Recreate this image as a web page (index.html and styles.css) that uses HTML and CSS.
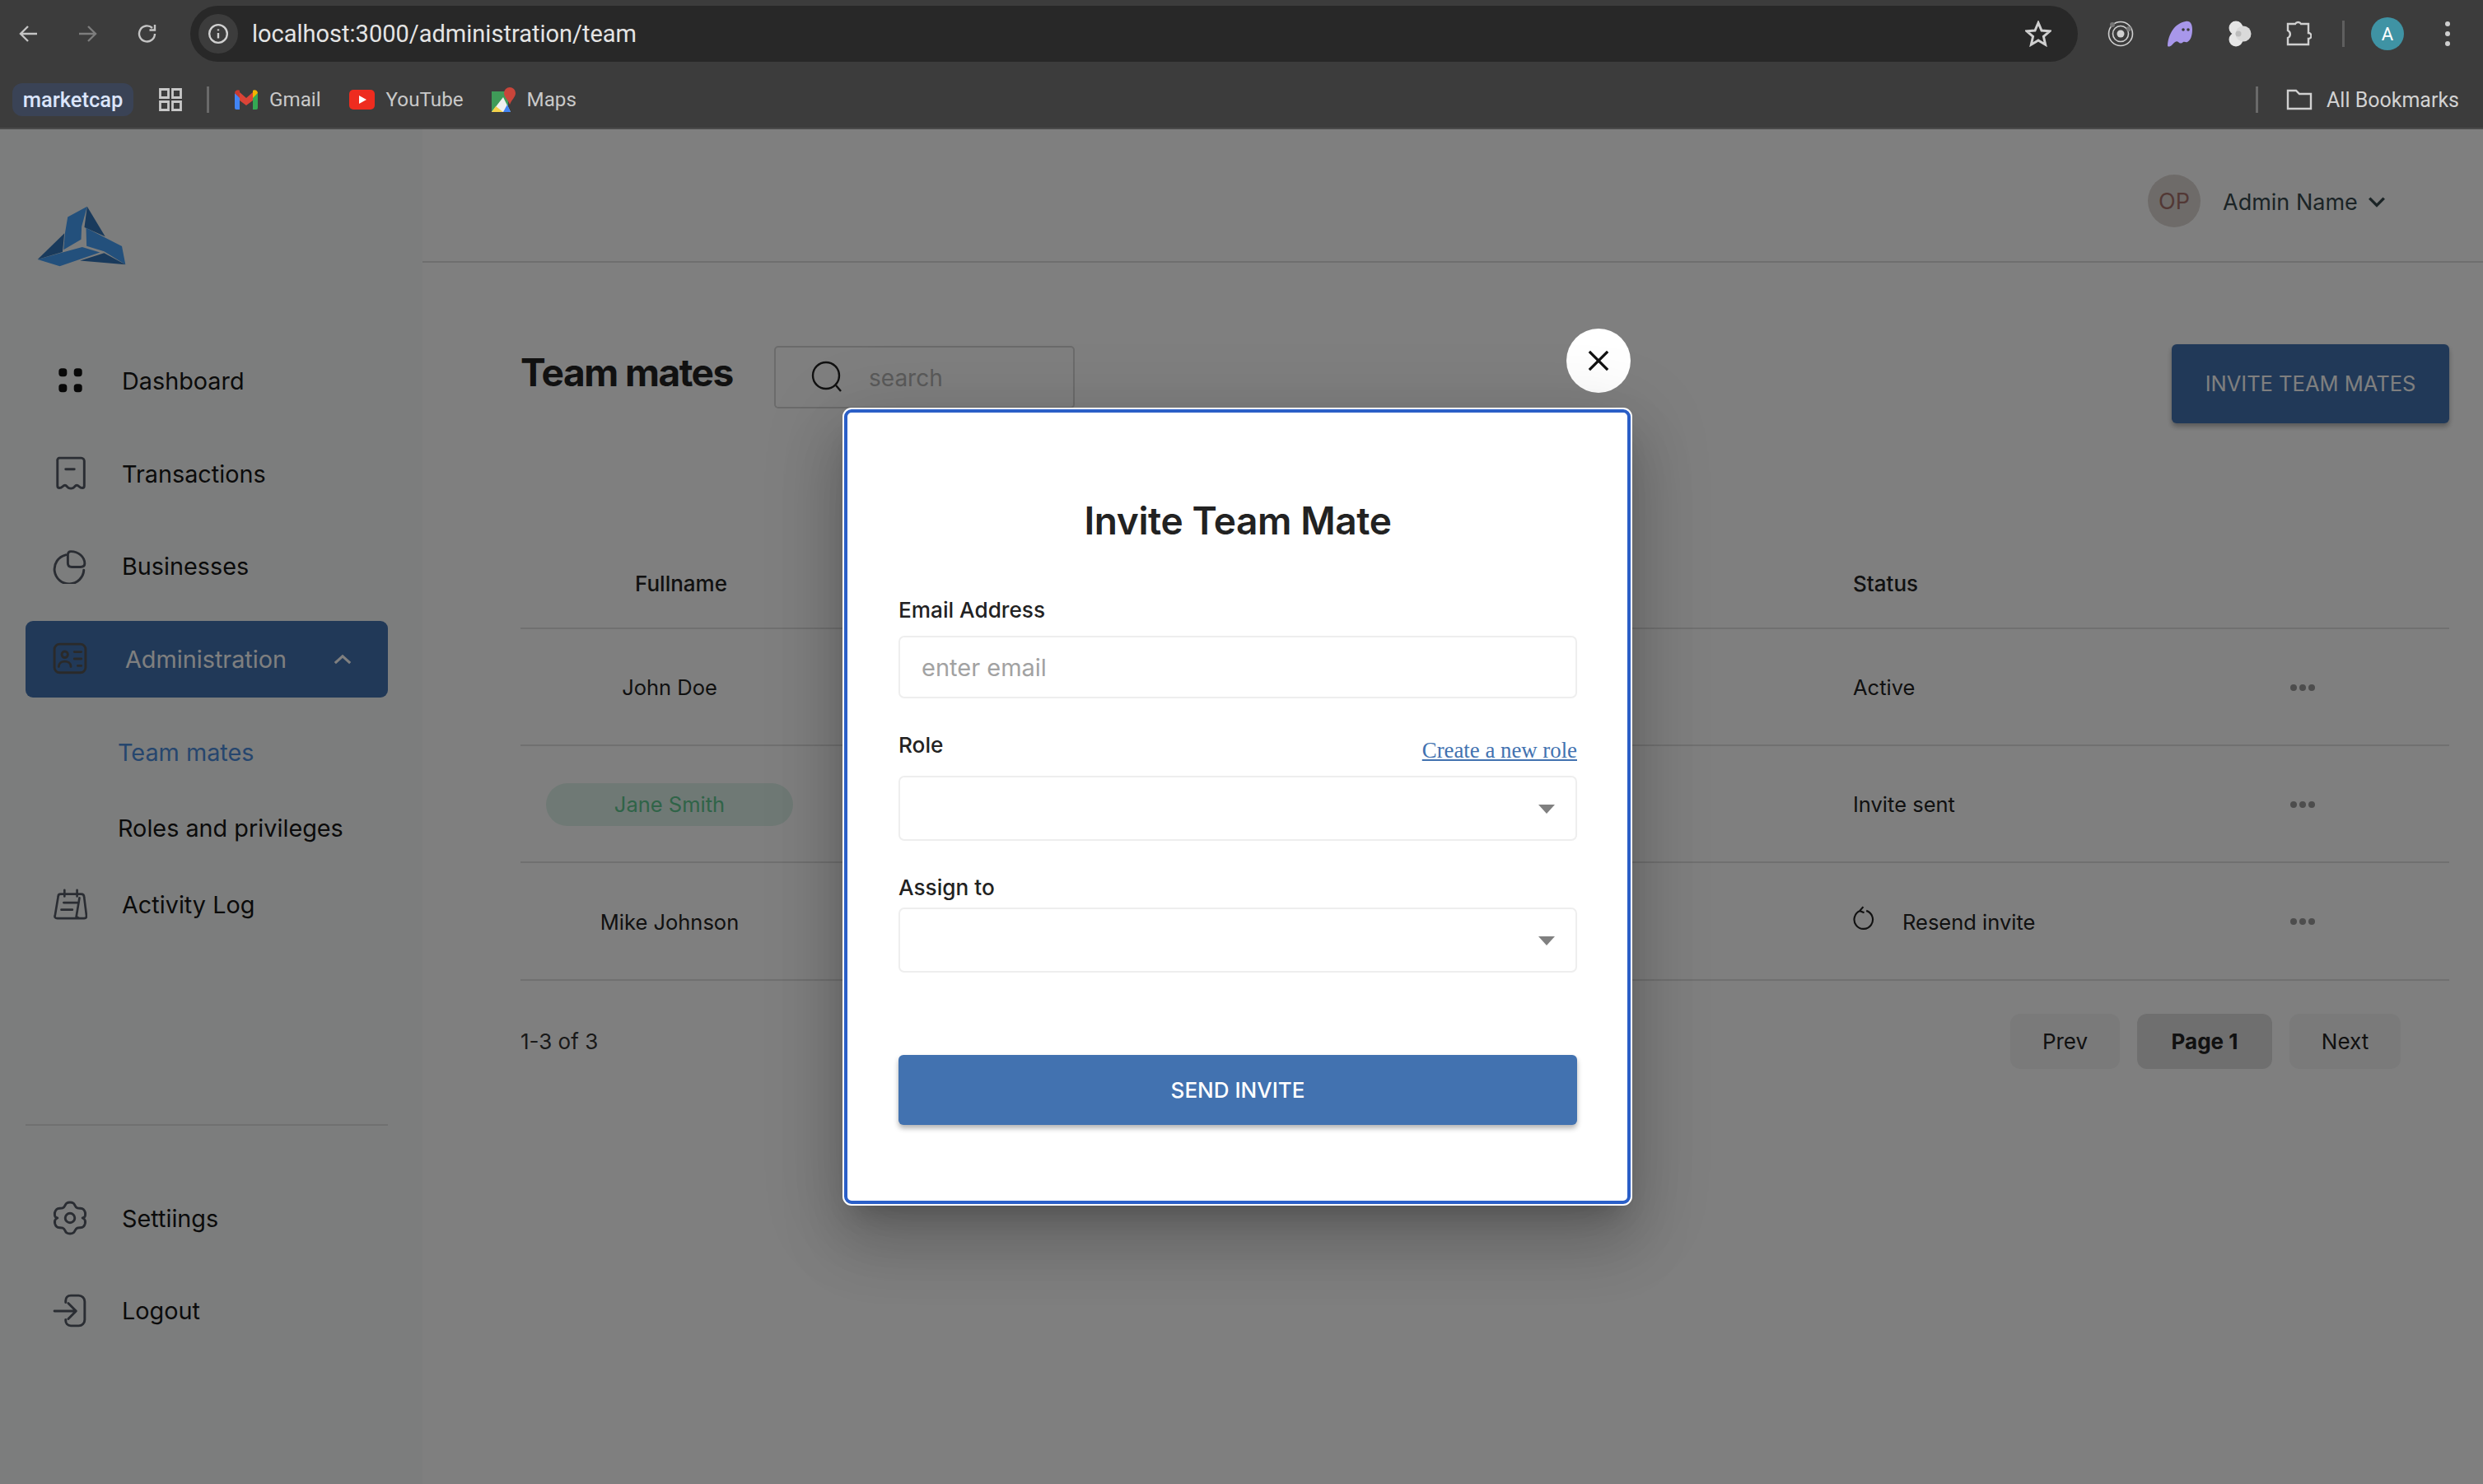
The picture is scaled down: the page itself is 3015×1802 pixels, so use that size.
FILE: index.html
```html
<!DOCTYPE html>
<html lang="en">
<head>
    <meta charset="UTF-8">
    <title>Team mates</title>
    <link rel="stylesheet" href="styles.css">
</head>
<body>
    <!-- browser chrome -->
    <div class="chrome">
        <div class="toolbar">
            <svg class="nav-arrow back" viewBox="0 0 24 24"><path d="M22 12H3M11 3l-9 9 9 9"/></svg>
            <svg class="nav-arrow forward" viewBox="0 0 24 24"><path d="M2 12h19M13 3l9 9-9 9"/></svg>
            <svg class="nav-arrow reload" viewBox="0 0 24 24"><path d="M21 12a9.5 9.5 0 1 1-3-7M21 1v6.500h-6.500"/></svg>
            <div class="urlbar">
                <span class="site-info">
                    <svg viewBox="0 0 24 24"><circle cx="12" cy="12" r="10"/><path d="M12 11v6M12 7v1.500"/></svg>
                </span>
                <span class="url">localhost:3000/administration/team</span>
                <svg class="star" viewBox="0 0 24 24"><path d="M12 2l3 7 7.500.6-5.700 4.900 1.700 7.400-6.500-3.900-6.500 3.900 1.700-7.400-5.700-4.900 7.500-.6z"/></svg>
            </div>
            <div class="ext-icons">
                <svg class="ext" viewBox="0 0 32 32"><circle cx="16" cy="16" r="14.500" fill="none" stroke="#d0d0d0" stroke-width="1.600"/><circle cx="16" cy="16" r="9.500" fill="none" stroke="#d0d0d0" stroke-width="1.600"/><circle cx="16" cy="16" r="4.500" fill="#d0d0d0"/><circle cx="6" cy="5" r="3" fill="#777"/><circle cx="26" cy="10" r="3" fill="#777"/></svg>
                <svg class="ext" viewBox="0 0 32 32"><path d="M1 30C2 16 10 3 23 1c6-1 8 4 8 10 0 7-2 13-6 15-2 1-3-1-5 0-2 2-4 2-6 0-3-2-5 1-8 4-3 2-5 2-5 0z" fill="#a897ea"/><circle cx="20" cy="11" r="1.800" fill="#3c3c3c"/><circle cx="26" cy="11" r="1.800" fill="#3c3c3c"/></svg>
                <svg class="ext" viewBox="0 0 32 32"><circle cx="12" cy="9" r="8.500" fill="#e6e6e6"/><circle cx="12" cy="23" r="8.500" fill="#e6e6e6"/><circle cx="21" cy="16" r="9.500" fill="#dadada"/><circle cx="15" cy="16" r="3.500" fill="#bdbdbd"/></svg>
                <svg class="ext puzzle" viewBox="0 0 32 32"><path d="M3 4h9a4 4 0 0 1 7 0h9v11a3.500 3.500 0 0 1 0 7v7H3v-8a5 5 0 0 0 0-9z"/></svg>
                <span class="ext-sep"></span>
                <span class="profile">A</span>
                <span class="menu-dots"><i></i><i></i><i></i></span>
            </div>
        </div>
        <div class="bookmarks">
            <span class="chip-mark">marketcap</span>
            <svg class="apps" viewBox="0 0 28 28"><path d="M1.500 1.500h10v10h-10zM16.500 1.500h10v10h-10zM1.500 16.500h10v10h-10zM16.500 16.500h10v10h-10z"/></svg>
            <span class="mark-sep"></span>
            <span class="mark gmail">
                <svg viewBox="0 0 28 24"><path d="M0 4v18a2 2 0 0 0 2 2h4V9z" fill="#4285f4"/><path d="M28 4v18a2 2 0 0 1-2 2h-4V9z" fill="#34a853"/><path d="M6 13V3L14 10 22 3v10l-8 6z" fill="#db4437"/><path d="M0 4c0-3 4-5 6-3v9z" fill="#c5392f"/><path d="M28 4c0-3-4-5-6-3v9z" fill="#f4b400"/></svg>
                Gmail
            </span>
            <span class="mark youtube">
                <svg viewBox="0 0 31 24"><rect width="31" height="24" rx="5" fill="#ee2c1f"/><path d="M12 7l9 5-9 5z" fill="#fff"/></svg>
                YouTube
            </span>
            <span class="mark maps">
                <svg viewBox="0 0 29 30"><path d="M0 5h20v25H0z" fill="#3f9b58"/><path d="M0 30L14 12l9 18z" fill="#f0f0f0"/><path d="M0 30l5-7 9 7z" fill="#f5d24a"/><path d="M14 30l5-9 4 9z" fill="#4285f4"/><path d="M22 0a7 7 0 0 1 7 7c0 5-5 8-7 14-2-6-7-9-7-14a7 7 0 0 1 7-7z" fill="#c9453a"/></svg>
                Maps
            </span>
            <span class="all-marks">
                <span class="mark-sep"></span>
                <svg class="folder" viewBox="0 0 32 26"><path d="M2 2h10l4 4h14v18H2z"/></svg>
                All Bookmarks
            </span>
        </div>
    </div>

    <div class="app">
        <aside class="sidebar">
            <svg class="logo" viewBox="135 150 325 222">
                <path d="M247 190l71-38-20 73-2 47-64 38 5-60z" fill="#46a0f8"/>
                <path d="M318 152l66 110-76-34z" fill="#3375b8"/>
                <path d="M314 230l131 67 13 67-78-48-64-20z" fill="#46a0f8"/>
                <path d="M380 322l78 42-166-14z" fill="#3375b8"/>
                <path d="M137 345l91-25 72-20 65 20-147 50z" fill="#46a0f8"/>
                <path d="M235 250l-7 68-91 27z" fill="#3375b8"/>
            </svg>

            <nav class="side-nav">
                <a class="nav-item">
                    <svg class="nav-icon" viewBox="0 0 40 40"><g class="solid"><rect x="7" y="5" width="9.500" height="9.500" rx="3.500"/><rect x="24.500" y="5" width="9.500" height="9.500" rx="3.500"/><rect x="7" y="23" width="9.500" height="9.500" rx="3.500"/><rect x="24.500" y="23" width="9.500" height="9.500" rx="3.500"/></g></svg>
                    Dashboard
                </a>
                <a class="nav-item">
                    <svg class="nav-icon" viewBox="0 0 40 40"><path d="M7 2h26a3.500 3.500 0 0 1 3.500 3.500V34c0 4-4 3-6 1-2-2-3.500-2-5 0-2 3-7 3-9 0-1.500-2-3-2-5 0-2 2-6 3-6-1V5.500A3.500 3.500 0 0 1 7 2zM15 15h10"/></svg>
                    Transactions
                </a>
                <a class="nav-item">
                    <svg class="nav-icon" viewBox="0 0 40 40"><path d="M15 6.500A17 17 0 1 0 36 24M21 2.500c-2.500 0-3.500 2-3.500 4V16c0 3 1.500 4.500 4.500 4.500h10c3 0 5-1.500 5-4C37 9 30 2.500 21 2.500z"/></svg>
                    Businesses
                </a>
                <a class="nav-item active">
                    <svg class="nav-icon" viewBox="0 0 40 40"><rect x="2" y="3" width="36" height="33" rx="6"/><circle cx="14" cy="15" r="3.500"/><path d="M7 29c0-8 14-8 14 0M25 12h8M25 20h8M29 28h4"/></svg>
                    <span class="nav-label">Administration</span>
                    <svg class="nav-chevron" viewBox="0 0 24 14"><path d="M2 12l10-9 10 9"/></svg>
                </a>
                <a class="sub-item current">Team mates</a>
                <a class="sub-item">Roles and privileges</a>
                <a class="nav-item after-sub">
                    <svg class="nav-icon" viewBox="0 0 44 40"><path d="M10 7h26c3 0 4 2 4 4l3 24c0 2-1 3-3 3H6c-3 0-4-2-3-4l4-24c0-2 1-3 3-3zM15 2v8M31 2v8M14 18h17M11 27h14M34 38l-4-2 4-24"/></svg>
                    Activity Log
                </a>
            </nav>

            <div class="side-bottom">
                <a class="nav-item">
                    <svg class="nav-icon" viewBox="0 0 40 40"><path d="M16 3c2-1.500 6-1.500 8 0 2 1.500 1.500 4.500 4.500 5.500s5-.5 7 1.500 2.500 5 2 7.500c-.5 2-3 2.500-3 2.500s2.500 1 3 3c.5 2.500 0 5-2 7s-4.500.5-7 1.500-2.500 4-4.500 5.500-6 1.500-8 0-1.500-4.500-4.500-5.500-5 .5-7-1.500-2.500-4.500-2-7c.5-2 3-3 3-3s-2.500-.5-3-2.500c-.5-2.500 0-5.500 2-7.500s4-.5 7-1.500S14 4.500 16 3z"/><circle cx="20" cy="20" r="5.500"/></svg>
                    Settiings
                </a>
                <a class="nav-item">
                    <svg class="nav-icon" viewBox="0 0 40 40"><path d="M15 10V8c0-3 2-6 6-6h9c4 0 7 3 7 7v21c0 4-3 7-7 7h-9c-4 0-6-3-6-6v-1M2 20h25M18 11l9 9-9 9"/></svg>
                    Logout
                </a>
            </div>
        </aside>

        <main class="main">
            <header class="topbar">
                <span class="avatar">OP</span>
                <span class="admin-name">Admin Name</span>
                <svg class="admin-chevron" viewBox="0 0 24 16"><path d="M2 3l10 10L22 3"/></svg>
            </header>

            <section class="content">
                <div class="heading-row">
                    <h1 class="page-title">Team mates</h1>
                    <div class="search">
                        <svg viewBox="0 0 40 40"><circle cx="18" cy="18" r="16"/><path d="M30 30l6 7"/></svg>
                        <span>search</span>
                    </div>
                    <button class="invite-btn">INVITE TEAM MATES</button>
                </div>

                <div class="table">
                    <div class="row head">
                        <div class="cell name-head">Fullname</div>
                        <div></div>
                        <div class="cell">Status</div>
                        <div></div>
                    </div>
                    <div class="row">
                        <div class="cell name">John Doe</div>
                        <div></div>
                        <div class="cell">Active</div>
                        <div class="dots"><i></i><i></i><i></i></div>
                    </div>
                    <div class="row">
                        <div class="cell name"><span class="name-chip">Jane Smith</span></div>
                        <div></div>
                        <div class="cell">Invite sent</div>
                        <div class="dots"><i></i><i></i><i></i></div>
                    </div>
                    <div class="row">
                        <div class="cell name">Mike Johnson</div>
                        <div></div>
                        <div class="cell resend">
                            <svg viewBox="0 0 24 28"><path d="M15 5.500a10.500 10.500 0 1 1-7 .2M11.500 1L7.500 5.700l5 2"/></svg>
                            Resend invite
                        </div>
                        <div class="dots"><i></i><i></i><i></i></div>
                    </div>
                </div>

                <div class="pager-row">
                    <span class="count">1-3 of 3</span>
                    <div class="pager">
                        <span class="page-btn prev">Prev</span>
                        <span class="page-btn now">Page 1</span>
                        <span class="page-btn next">Next</span>
                    </div>
                </div>
            </section>
        </main>

        <!-- dialog on top of the page -->
        <div class="backdrop"></div>
        <button class="close-btn">
            <svg viewBox="0 0 28 28"><path d="M2 2l24 24M26 2L2 26"/></svg>
        </button>
        <div class="modal">
            <h2 class="modal-title">Invite Team Mate</h2>

            <label class="field-label">Email Address</label>
            <div class="input placeholder">enter email</div>

            <div class="role-row">
                <label class="field-label">Role</label>
                <a class="new-role">Create a new role</a>
            </div>
            <div class="input select"><span class="caret"></span></div>

            <label class="field-label assign">Assign to</label>
            <div class="input select"><span class="caret"></span></div>

            <button class="send-btn">SEND INVITE</button>
        </div>
    </div>
</body>
</html>
```

FILE: styles.css
```css
* {
    box-sizing: border-box;
}

body {
    margin: 0;
    width: 3015px;
    height: 1802px;
    overflow: hidden;
    font-family: Inter, "Liberation Sans", sans-serif;
    background: #fff;
}

/* browser chrome */
.chrome {
    height: 157px;
    background: #3c3c3c;
    border-bottom: 2px solid #4a4a4a;
    font-family: Roboto, "Liberation Sans", sans-serif;
    color: #c9c9c9;
}

.toolbar {
    display: flex;
    align-items: center;
    height: 82px;
}

.nav-arrow {
    width: 24px;
    height: 24px;
    fill: none;
    stroke: #c4c4c4;
    stroke-width: 2.400;
    flex: none;
}

.nav-arrow.back { margin-left: 23px; }
.nav-arrow.forward { margin-left: 47px; stroke: #7d7d7d; }
.nav-arrow.reload { margin-left: 49px; }

.urlbar {
    display: flex;
    align-items: center;
    width: 2292px;
    height: 68px;
    margin-left: 40px;
    padding: 0 32px 0 10px;
    background: #282828;
    border-radius: 34px;
}

.site-info {
    display: flex;
    align-items: center;
    justify-content: center;
    width: 48px;
    height: 48px;
    border-radius: 50%;
    background: #3c3c3c;
}

.site-info svg {
    width: 26px;
    height: 26px;
    fill: none;
    stroke: #d0d0d0;
    stroke-width: 2.200;
}

.url {
    margin-left: 17px;
    font-size: 29px;
    color: #e4e4e4;
}

.star {
    width: 32px;
    height: 32px;
    margin-left: auto;
    fill: none;
    stroke: #d0d0d0;
    stroke-width: 2.200;
}

.ext-icons {
    display: flex;
    align-items: center;
    margin-left: 36px;
}

.ext {
    width: 32px;
    height: 32px;
    margin-right: 40px;
    flex: none;
}

.puzzle {
    fill: none;
    stroke: #d0d0d0;
    stroke-width: 2.400;
    margin-right: 37px;
}

.ext-sep {
    width: 3px;
    height: 32px;
    background: #5f5f5f;
}

.profile {
    display: flex;
    align-items: center;
    justify-content: center;
    width: 40px;
    height: 40px;
    margin-left: 32px;
    border-radius: 50%;
    background: #3f93a4;
    color: #fff;
    font-size: 22px;
}

.menu-dots {
    display: flex;
    flex-direction: column;
    gap: 6px;
    margin-left: 50px;
}

.menu-dots i {
    width: 6px;
    height: 6px;
    border-radius: 50%;
    background: #cfcfcf;
}

.bookmarks {
    display: flex;
    align-items: center;
    height: 44px;
    margin-top: 17px;
    padding-left: 15px;
    font-size: 24.200px;
}

.chip-mark {
    display: flex;
    align-items: center;
    justify-content: center;
    width: 147px;
    height: 40px;
    border-radius: 12px;
    background: #3a4356;
    color: #dbe5fb;
    font-size: 25.500px;
    font-weight: 500;
}

.apps {
    width: 28px;
    height: 28px;
    margin-left: 31px;
    fill: none;
    stroke: #c8c8c8;
    stroke-width: 2.800;
}

.mark-sep {
    width: 3px;
    height: 32px;
    margin-left: 30px;
    background: #6a6a6a;
}

.mark {
    display: flex;
    align-items: center;
    gap: 14px;
    color: #c9c9c9;
}

.mark.gmail { margin-left: 31px; }
.mark.youtube { margin-left: 34px; }
.mark.maps { margin-left: 34px; }
.gmail svg { width: 28px; height: 24px; }
.youtube svg { width: 31px; height: 24px; }
.maps svg { width: 29px; height: 30px; }

.all-marks {
    display: flex;
    align-items: center;
    margin-left: auto;
    padding-right: 29px;
    font-size: 25px;
    color: #d2d2d2;
}

.all-marks .mark-sep {
    margin: 0 34px 0 0;
}

.folder {
    width: 32px;
    height: 26px;
    margin-right: 17px;
    fill: none;
    stroke: #d0d0d0;
    stroke-width: 2.400;
}

/* page */
.app {
    position: relative;
    display: flex;
    height: 1645px;
    overflow: hidden;
}

.sidebar {
    display: flex;
    flex-direction: column;
    flex: none;
    width: 513px;
    padding: 0 42px 0 31px;
    background: #f9fbfa;
    font-size: 28.800px;
    color: #161616;
}

.logo {
    display: block;
    width: 108px;
    height: 74px;
    margin: 93px 0 0 14px;
}

.side-nav {
    display: flex;
    flex-direction: column;
    margin-top: 92px;
}

.nav-item {
    display: flex;
    align-items: center;
    height: 93px;
    margin-bottom: 19.500px;
    padding-left: 33px;
}

.nav-icon {
    width: 42px;
    height: 42px;
    margin-right: 42px;
    flex: none;
    fill: none;
    stroke: #555b66;
    stroke-width: 2.800;
    stroke-linecap: round;
    stroke-linejoin: round;
}

.nav-icon .solid {
    fill: #111;
    stroke: none;
}

.nav-item.active {
    margin-bottom: 21px;
    padding-right: 44px;
    border-radius: 9px;
    background: #4272b0;
    color: #fff;
}

.nav-item.active .nav-icon {
    stroke: #555;
    margin-right: 46px;
}

.nav-chevron {
    width: 22px;
    height: 13px;
    margin-left: auto;
    fill: none;
    stroke: #fff;
    stroke-width: 3.500;
}

.sub-item {
    display: flex;
    align-items: center;
    height: 92px;
    padding-left: 112px;
}

.sub-item.current {
    color: #4c8cdc;
}

.nav-item.after-sub {
    margin-bottom: 0;
}

.side-bottom {
    margin-top: 220px;
    padding-top: 66px;
    border-top: 2px solid #e0e0e0;
}

/* top bar */
.main {
    flex: 1;
    min-width: 0;
}

.topbar {
    display: flex;
    align-items: center;
    height: 162px;
    padding: 14px 0 0 2095px;
    border-bottom: 2px solid #dfdfdf;
}

.avatar {
    display: flex;
    align-items: center;
    justify-content: center;
    width: 64px;
    height: 64px;
    border-radius: 50%;
    background: #dcd6d2;
    color: #a5706a;
    font-size: 27px;
}

.admin-name {
    margin-left: 27px;
    padding-top: 2px;
    font-size: 27px;
    color: #36484c;
}

.admin-chevron {
    width: 22px;
    height: 14px;
    margin-left: 12px;
    margin-top: 2px;
    fill: none;
    stroke: #36484c;
    stroke-width: 4;
}

/* team mates list */
.content {
    padding: 99px 41px 0 119px;
}

.heading-row {
    display: flex;
    align-items: flex-start;
    height: 96px;
}

.page-title {
    width: 308px;
    margin: 5px 0 0;
    font-size: 46px;
    font-weight: 700;
    letter-spacing: -1.500px;
    line-height: 58px;
    color: #222;
}

.search {
    display: flex;
    align-items: center;
    width: 365px;
    height: 76px;
    margin-top: 2px;
    padding-left: 43px;
    border: 2px solid #d6d6d6;
    border-radius: 5px;
    color: #b4b4b4;
    font-size: 28px;
}

.search svg {
    width: 40px;
    height: 40px;
    margin-right: 30px;
    fill: none;
    stroke: #222;
    stroke-width: 2.400;
}

.search span {
    padding-top: 2px;
}

.invite-btn {
    width: 337px;
    height: 96px;
    margin-left: auto;
    padding: 0 0 2px;
    border: 0;
    border-radius: 6px;
    background: #4272b0;
    color: #fff;
    font-family: Inter, "Liberation Sans", sans-serif;
    font-size: 25.500px;
    font-weight: 400;
    box-shadow: 0 4px 6px rgba(0, 0, 0, 0.3);
}

.table {
    margin-top: 140px;
}

.row {
    display: grid;
    grid-template-columns: 362px 1256px 530px 1fr;
    align-items: center;
    height: 142px;
    padding-top: 1px;
    border-bottom: 2px solid #e0e0e0;
    font-size: 25.500px;
    color: #222;
}

.row:last-child {
    height: 143px;
}

.row.head {
    height: 110px;
    padding-top: 0;
    font-size: 26px;
    font-weight: 500;
}

.name,
.name-head {
    text-align: center;
}

.name-head {
    padding-left: 28px;
}

.name-chip {
    display: block;
    width: 300px;
    height: 52px;
    margin: 0 auto;
    border-radius: 26px;
    background: #def2ea;
    color: #60c890;
    line-height: 52px;
}

.resend {
    display: flex;
    align-items: center;
    gap: 34px;
}

.resend svg {
    width: 26px;
    height: 30px;
    margin-top: -8px;
    fill: none;
    stroke: #222;
    stroke-width: 2;
}

.dots {
    display: flex;
    gap: 3px;
    padding-left: 1px;
}

.dots i {
    width: 8px;
    height: 8px;
    border-radius: 50%;
    background: #9a9a9a;
}

.pager-row {
    display: flex;
    align-items: center;
    justify-content: space-between;
    margin-top: 40px;
    padding-right: 59px;
    font-size: 26px;
    color: #333;
}

.pager {
    display: flex;
    gap: 21px;
}

.page-btn {
    display: flex;
    align-items: center;
    justify-content: center;
    height: 67px;
    border-radius: 12px;
    background: #f5f5f5;
    color: #222;
}

.page-btn.prev { width: 133px; }
.page-btn.now { width: 164px; background: #dedede; font-weight: 700; }
.page-btn.next { width: 135px; }

/* dialog */
.backdrop {
    position: absolute;
    inset: 0;
    background: rgba(0, 0, 0, 0.5);
}

.close-btn {
    position: absolute;
    left: 1902px;
    top: 242px;
    display: flex;
    align-items: center;
    justify-content: center;
    width: 78px;
    height: 78px;
    padding: 0;
    border: 0;
    border-radius: 50%;
    background: #fff;
}

.close-btn svg {
    width: 26px;
    height: 26px;
    fill: none;
    stroke: #111;
    stroke-width: 3.500;
}

.modal {
    position: absolute;
    left: 1025px;
    top: 340px;
    display: flex;
    flex-direction: column;
    width: 955px;
    height: 965px;
    padding: 0 61px 0 62px;
    border: 4px solid #2b5fc7;
    border-radius: 9px;
    background: #fff;
    box-shadow: 0 0 0 2px #fff, 0 22px 30px -14px rgba(0, 0, 0, 0.2), 0 48px 76px 6px rgba(0, 0, 0, 0.14), 0 18px 92px 16px rgba(0, 0, 0, 0.12);
}

.modal-title {
    margin: 102px 0 0;
    font-size: 46px;
    font-weight: 600;
    letter-spacing: -0.400px;
    line-height: 58px;
    text-align: center;
    color: #222;
}

.field-label {
    display: block;
    margin-top: 64px;
    font-size: 26.200px;
    font-weight: 500;
    line-height: 32px;
    color: #222;
}

.input {
    display: flex;
    align-items: center;
    height: 76px;
    margin-top: 15px;
    padding-left: 26px;
    border: 2px solid #eee;
    border-radius: 7px;
    font-size: 29px;
    color: #a2a2a2;
}

.role-row {
    display: flex;
    align-items: flex-start;
    justify-content: space-between;
    margin-top: 41px;
}

.role-row .field-label {
    margin-top: 0;
}

.new-role {
    margin-top: 6px;
    font-family: "Liberation Serif", serif;
    font-size: 26.800px;
    line-height: 32px;
    color: #4272b0;
    text-decoration: underline;
}

.select {
    position: relative;
    height: 79px;
    margin-top: 15px;
}

.caret {
    position: absolute;
    right: 25px;
    top: 33px;
    border-left: 10px solid transparent;
    border-right: 10px solid transparent;
    border-top: 11px solid #808080;
}

.field-label.assign {
    margin-top: 41px;
}

.assign + .select {
    margin-top: 8px;
}

.send-btn {
    height: 85px;
    margin-top: 100px;
    border: 0;
    border-radius: 6px;
    background: #4272b0;
    color: #fff;
    font-family: Inter, "Liberation Sans", sans-serif;
    font-size: 26px;
    font-weight: 500;
    box-shadow: 0 4px 6px rgba(0, 0, 0, 0.3);
}
```
